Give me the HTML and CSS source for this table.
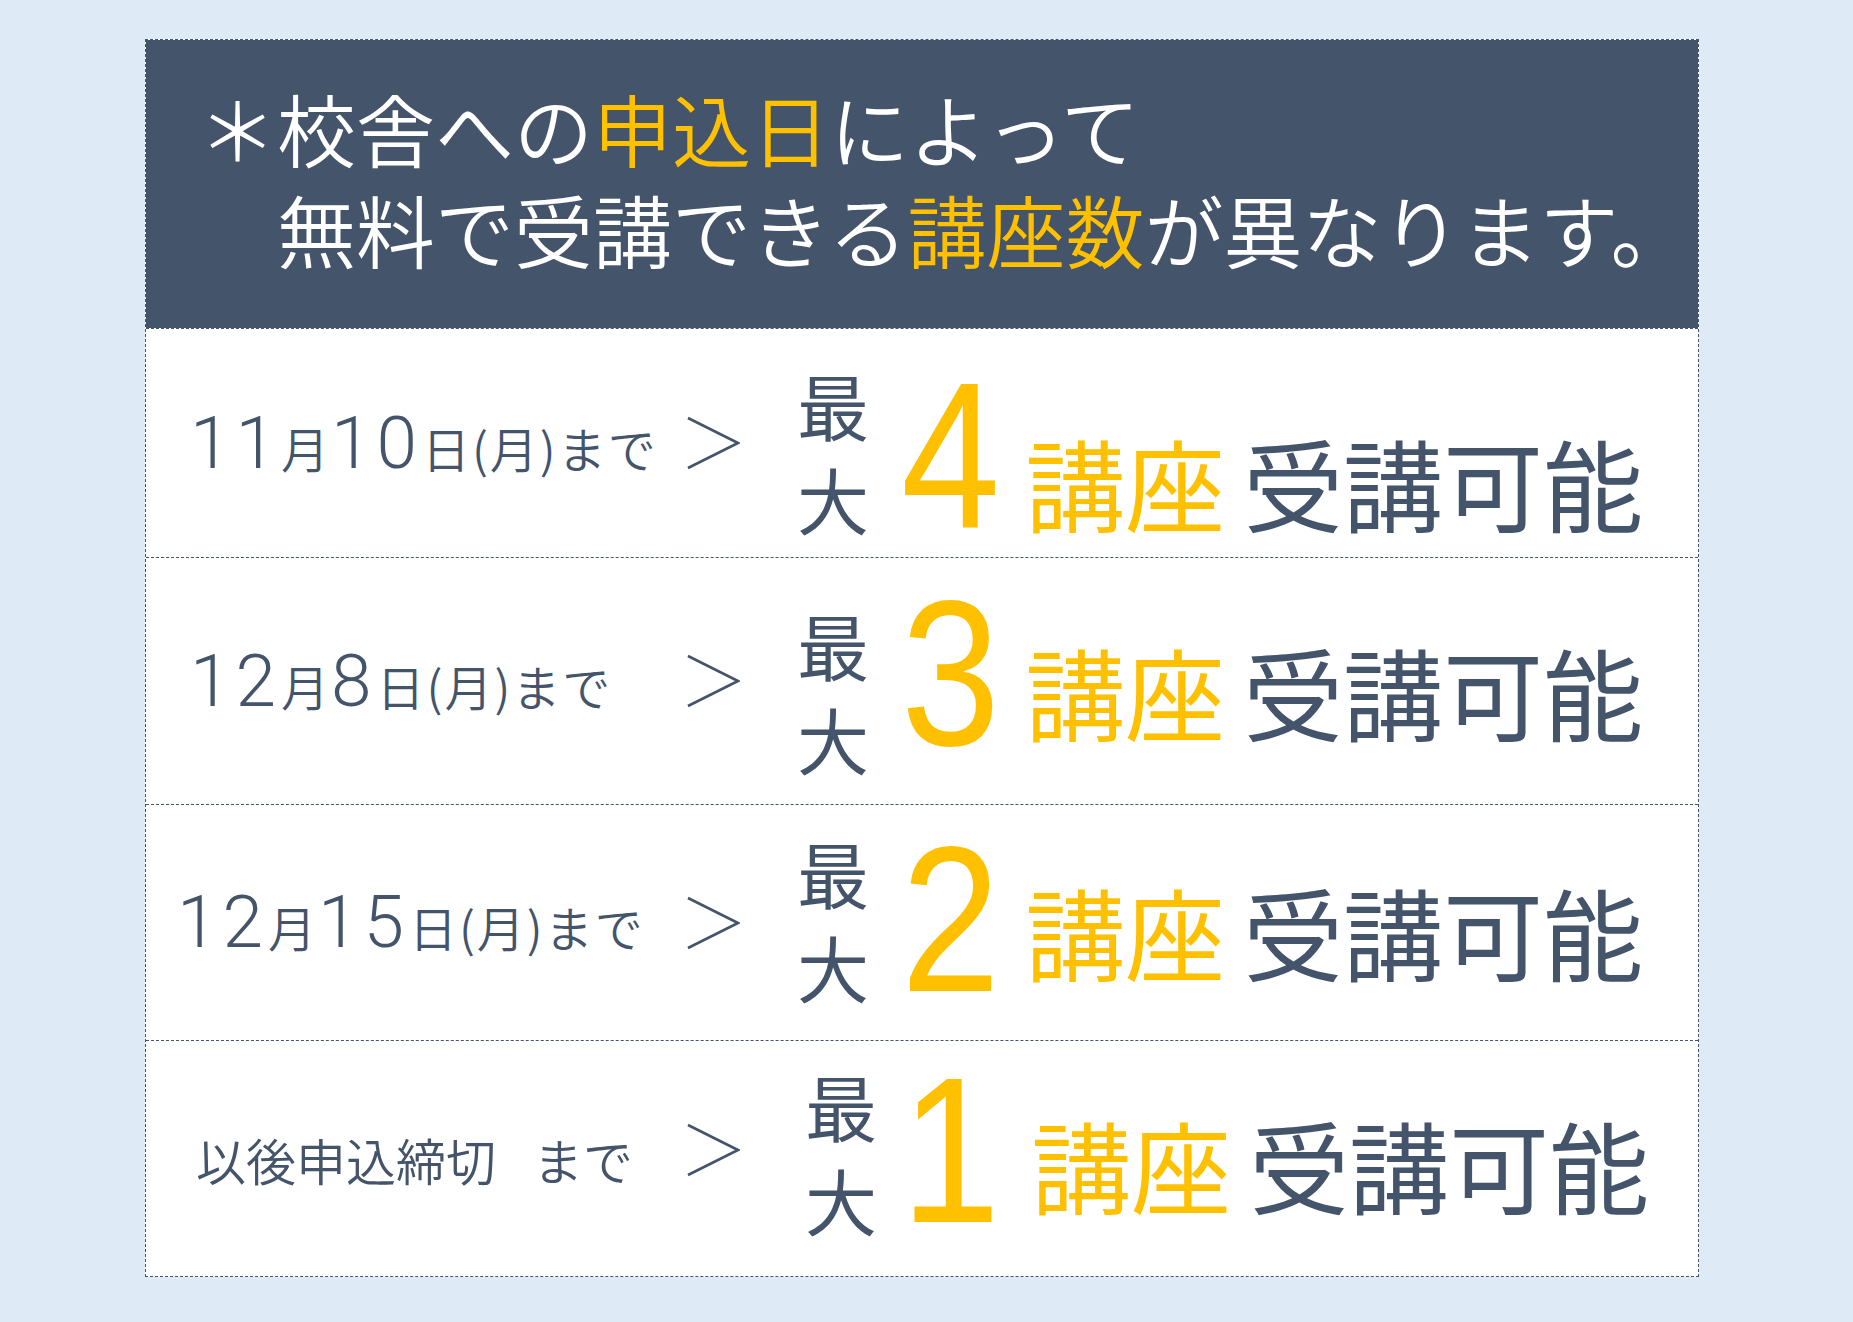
FILE: index.html
```html
<!DOCTYPE html>
<html lang="ja">
<head>
<meta charset="utf-8">
<title>講座数のご案内</title>
<link rel="stylesheet" href="styles.css">
</head>
<body>
<div class="card">
  <div class="header">
    <p class="hl">＊校舎への<span class="y">申込日</span>によって</p>
    <p class="hl hl-indent">無料で受講できる<span class="y">講座数</span>が異なります。</p>
  </div>

  <div class="row r1">
    <div class="date"><span class="n">11</span>月<span class="n">10</span>日(月)まで</div>
    <svg class="arrow" viewBox="0 0 54 54" aria-label="＞"><polyline points="2,2 52,27 2,52"/></svg>
    <div class="max"><span class="mc">最</span><span class="mc">大</span></div>
    <div class="big">4</div>
    <div class="course"><span class="y">講座</span><span class="avail">受講可能</span></div>
  </div>

  <div class="row r2">
    <div class="date"><span class="n">12</span>月<span class="n">8</span>日(月)まで</div>
    <svg class="arrow" viewBox="0 0 54 54" aria-label="＞"><polyline points="2,2 52,27 2,52"/></svg>
    <div class="max"><span class="mc">最</span><span class="mc">大</span></div>
    <div class="big">3</div>
    <div class="course"><span class="y">講座</span><span class="avail">受講可能</span></div>
  </div>

  <div class="row r3">
    <div class="date"><span class="n">12</span>月<span class="n">15</span>日(月)まで</div>
    <svg class="arrow" viewBox="0 0 54 54" aria-label="＞"><polyline points="2,2 52,27 2,52"/></svg>
    <div class="max"><span class="mc">最</span><span class="mc">大</span></div>
    <div class="big">2</div>
    <div class="course"><span class="y">講座</span><span class="avail">受講可能</span></div>
  </div>

  <div class="row r4">
    <div class="date date-small">以後申込締切<span class="gap">まで</span></div>
    <svg class="arrow" viewBox="0 0 54 54" aria-label="＞"><polyline points="2,2 52,27 2,52"/></svg>
    <div class="max"><span class="mc">最</span><span class="mc">大</span></div>
    <div class="big">1</div>
    <div class="course"><span class="y">講座</span><span class="avail">受講可能</span></div>
  </div>
</div>
</body>
</html>
```

FILE: styles.css
```css
html, body {
  margin: 0;
  padding: 0;
}

body {
  background: #deebf7;
  font-family: "Noto Sans CJK JP", "Noto Sans", sans-serif;
  font-weight: 350;
  color: #44546a;
  padding: 39px 0 45px 145px;
}

.card {
  width: 1552px;
  background: #ffffff;
  border: 1px dashed #44546a;
}

.y {
  color: #ffc000;
}

/* header */
.header {
  background: #44546a;
  height: 288px;
  box-sizing: border-box;
  padding: 37px 0 0 52px;
}

.hl {
  margin: 0;
  color: #ffffff;
  font-size: 79px;
  line-height: 101px;
  white-space: nowrap;
}

.hl-indent {
  padding-left: 1em;
}

/* rows */
.row {
  display: flex;
  align-items: center;
  border-top: 1px dashed #44546a;
  box-sizing: border-box;
  padding-left: 44px;
}

.r1 { height: 229px; }
.r2 { height: 247px; }
.r3 { height: 236px; padding-left: 31px; }
.r4 { height: 236px; padding-left: 50px; }

.date {
  font-size: 48px;
  line-height: 1;
  white-space: nowrap;
  letter-spacing: 2px;
  flex: 0 0 auto;
  width: 496px;
}

.r3 .date { width: 509px; }
.r4 .date { width: 490px; }

.date .n {
  font-family: "Roboto", "Liberation Sans", sans-serif;
  font-weight: 300;
  font-size: 73px;
  letter-spacing: 5px;
}

.date-small {
  font-size: 50px;
  letter-spacing: 0;
}

.gap {
  margin-left: 37px;
}

.arrow {
  width: 54px;
  height: 54px;
  flex: 0 0 auto;
  margin-right: 57px;
  fill: none;
  stroke: #44546a;
  stroke-width: 2.6;
  stroke-linejoin: miter;
}

.r4 .arrow { margin-bottom: 18px; }

.max {
  display: flex;
  flex-direction: column;
  gap: 22px;
  font-size: 72px;
  font-weight: 400;
  width: 72px;
  flex: 0 0 auto;
  margin-right: 32px;
}

.mc {
  display: block;
  height: 72px;
  line-height: 72px;
}

.r1 .max { margin-top: 16px; }
.r2 .max { margin-top: 20px; }
.r3 .max { margin-bottom: 8px; }
.r4 .max { margin-bottom: 14px; margin-left: 8px; margin-right: 24px; }

.big {
  font-family: "Liberation Sans", sans-serif;
  font-weight: 400;
  font-size: 207px;
  line-height: 1;
  color: #ffc000;
  flex: 0 0 auto;
  transform: scaleX(0.86);
  transform-origin: left center;
  margin-right: 9px;
}

.r1 .big { margin-top: 24px; }
.r2 .big { margin-bottom: 16px; }
.r3 .big { margin-bottom: 6px; }
.r4 .big { margin-bottom: 16px; }

.course {
  font-size: 100px;
  font-weight: 400;
  line-height: 1;
  white-space: nowrap;
  flex: 0 0 auto;
}

.avail {
  margin-left: 18px;
}

.r1 .course { margin-top: 78px; }
.r2 .course { margin-top: 20px; }
.r3 .course { margin-top: 16px; }
.r4 .course { margin-top: 10px; margin-left: 6px; }
```
